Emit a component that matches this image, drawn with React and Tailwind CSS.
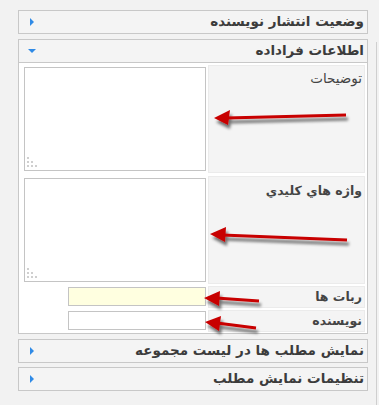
import React from 'react'

const font = { fontFamily: '"DejaVu Sans", Tahoma, sans-serif' }

const Caret = ({ open }) => (
  <svg width="9" height="9" viewBox="0 0 9 9" className="shrink-0">
    {open
      ? <polygon points="0,2 8,2 4,6" fill="#2f8ae6" />
      : <polygon points="2,0 6,4 2,8" fill="#2f8ae6" />}
  </svg>
)

const Header = ({ title, open, className = "" }) => (
  <div className={`h-[24px] border border-[#c8c8c8] bg-[#f4f4f4] flex items-center justify-between pr-[3px] pl-[9px] ${className}`}>
    <span className="text-[13.5px] font-bold text-[#3c3c3c] leading-none pb-[1px] whitespace-nowrap">{title}</span>
    <Caret open={open} />
  </div>
)

const Grip = () => (
  <svg width="12" height="12" viewBox="0 0 12 12" className="absolute left-[1px] bottom-[1px]">
    <g fill="#cfcfcf">
      <rect x="1" y="0" width="2" height="2" />
      <rect x="1" y="4" width="2" height="2" />
      <rect x="5" y="4" width="2" height="2" />
      <rect x="1" y="8" width="2" height="2" />
      <rect x="5" y="8" width="2" height="2" />
      <rect x="9" y="8" width="2" height="2" />
    </g>
  </svg>
)

const Label = ({ children, className = "", bold }) => (
  <div className={`w-[157px] shrink-0 bg-[#f4f4f4] border border-[#ebebeb] px-[2px] ${className}`}>
    <span className={`text-[#444] whitespace-nowrap ${bold ? "font-bold text-[12.5px]" : "text-[13.5px]"}`}>{children}</span>
  </div>
)

const Arrows = () => (
  <svg width="379" height="405" className="absolute inset-0 pointer-events-none">
    <defs>
      <filter id="sh" x="-20%" y="-50%" width="140%" height="250%">
        <feGaussianBlur in="SourceAlpha" stdDeviation="1.6" />
        <feOffset dx="2" dy="4" result="b" />
        <feComponentTransfer><feFuncA type="linear" slope="0.55" /></feComponentTransfer>
        <feMerge><feMergeNode /><feMergeNode in="SourceGraphic" /></feMerge>
      </filter>
    </defs>
    <g filter="url(#sh)" fill="#c80000" stroke="#c80000">
      <line x1="346" y1="115" x2="226" y2="118" strokeWidth="3" />
      <polygon points="214,118 230,110 228,125" stroke="none" />
      <line x1="347" y1="240" x2="222" y2="235" strokeWidth="3" />
      <polygon points="210,234 226,227 225,242" stroke="none" />
      <line x1="259" y1="301" x2="216" y2="298" strokeWidth="3" />
      <polygon points="204,298 220,291 219,306" stroke="none" />
      <line x1="256" y1="328" x2="217" y2="323" strokeWidth="3" />
      <polygon points="205,322 221,316 219,331" stroke="none" />
    </g>
  </svg>
)

export default function App() {
  return (
    <div className="relative w-[379px] h-[405px] bg-[#f2f2f2] overflow-hidden" style={font} dir="rtl">
      <div className="absolute left-[376px] top-[42px] bottom-0 w-px bg-[#cfcfcf]" />
      <div className="w-[350px] mr-[11px] pt-[10px]">
        <Header title="وضعیت انتشار نویسنده" />
        <Header title="اطلاعات فراداده" open className="mt-[5px]" />
        <div className="bg-white border border-t-0 border-[#c8c8c8] px-[2px] pt-[2px] pb-[1px]">
          <div className="flex h-[108px]">
            <Label>توضیحات</Label>
            <div className="flex-1 pr-[2px] pt-[2px]">
              <div className="relative w-[182px] h-[104px] border border-[#c4c4c4] bg-white"><Grip /></div>
            </div>
          </div>
          <div className="flex h-[108px] mt-[3px]">
            <Label className="pt-[1px]" bold>واژه هاي کليدي</Label>
            <div className="flex-1 pr-[2px] pt-[2px]">
              <div className="relative w-[182px] h-[104px] border border-[#c4c4c4] bg-white"><Grip /></div>
            </div>
          </div>
          <div className="flex h-[22px] mt-[2px]">
            <Label className="flex items-center" bold>ربات ها</Label>
            <div className="flex-1 pr-[2px] pt-[1px]">
              <div className="w-[138px] h-[19px] border border-[#c4c4c4] bg-[#ffffe0]" />
            </div>
          </div>
          <div className="flex h-[22px] mt-[2px]">
            <Label className="flex items-center" bold>نویسنده</Label>
            <div className="flex-1 pr-[2px] pt-[1px]">
              <div className="w-[138px] h-[19px] border border-[#c4c4c4] bg-white" />
            </div>
          </div>
        </div>
        <Header title="نمایش مطلب ها در لیست مجموعه" className="mt-[5px]" />
        <Header title="تنظیمات نمایش مطلب" className="mt-[4px]" />
      </div>
      <Arrows />
    </div>
  )
}
